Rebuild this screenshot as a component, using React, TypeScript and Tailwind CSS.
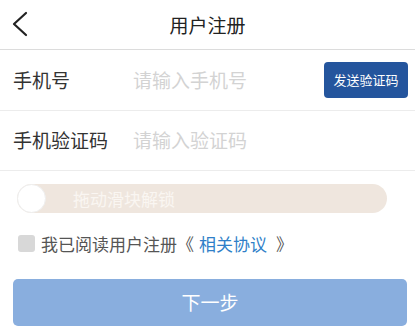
import { useState } from 'react'

const font = { fontFamily: '"Noto Sans CJK SC", "Noto Sans", sans-serif' }

export default function App() {
  const [checked, setChecked] = useState(false)

  return (
    <main className="flex h-[333px] w-[415px] flex-col bg-white" style={font}>
      <header className="relative flex h-[50px] items-center justify-center border-b border-[#dcdcdc]">
        <button className="absolute left-[10px] top-[11px] text-[#222]">
          <svg width="20" height="26" viewBox="0 0 20 26" fill="none">
            <path d="M16 2 L4 13 L16 24" stroke="currentColor" strokeWidth="2.2" strokeLinecap="round" strokeLinejoin="round" />
          </svg>
        </button>
        <h1 className="text-[19px] leading-none text-[#222]">用户注册</h1>
      </header>

      <div className="flex h-[61px] items-center border-b border-[#ececec] pl-[13px] pr-[7px]">
        <span className="w-[120px] text-[19px] text-[#333]">手机号</span>
        <input
          className="min-w-0 flex-1 text-[19px] text-[#333] outline-none placeholder:text-[#d3d3d3]"
          placeholder="请输入手机号"
        />
        <button className="h-[36px] w-[84px] rounded-[4px] bg-[#24559d] text-[13px] text-white">
          发送验证码
        </button>
      </div>

      <div className="flex h-[60px] items-center border-b border-[#ececec] pl-[13px] pr-[7px]">
        <span className="w-[120px] text-[19px] text-[#333]">手机验证码</span>
        <input
          className="min-w-0 flex-1 text-[19px] text-[#333] outline-none placeholder:text-[#d3d3d3]"
          placeholder="请输入验证码"
        />
      </div>

      <div className="px-[17px] pt-[13px]">
        <div className="flex h-[29px] w-[370px] items-center rounded-full bg-[#efe6de]">
          <div className="h-[29px] w-[29px] rounded-full border border-[#eeeeee] bg-white" />
          <span className="ml-[27px] text-[17px] text-[#faf6f2]">拖动滑块解锁</span>
        </div>
      </div>

      <label className="mt-[18px] flex items-center pl-[18px] text-[17px] text-[#555]">
        <span
          onClick={() => setChecked(!checked)}
          className="mr-[6px] h-[17px] w-[17px] rounded-[3px] bg-[#d8d8d8]"
        />
        我已阅读用户注册《
        <span className="ml-[5px] text-[#2f7fc8]">相关协议</span>
        <span className="ml-[9px]">》</span>
      </label>

      <div className="pl-[13px] pr-[8px] pt-[22px]">
        <button className="h-[47px] w-full rounded-[5px] bg-[#89aede] text-[19px] text-white">
          下一步
        </button>
      </div>
    </main>
  )
}
